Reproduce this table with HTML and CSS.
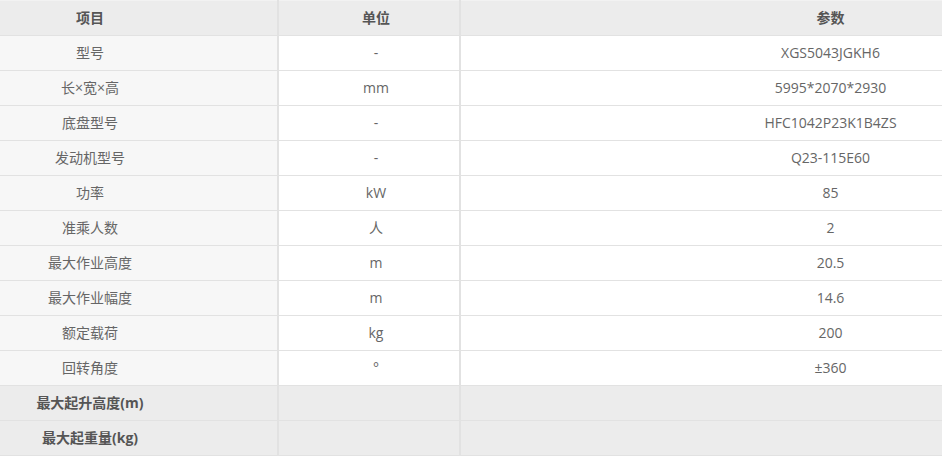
FILE: index.html
```html
<!DOCTYPE html>
<html lang="zh-CN">
<head>
<meta charset="utf-8">
<title>参数</title>
<link rel="stylesheet" href="styles.css">
</head>
<body>
<table class="spec">
  <thead>
    <tr><th class="c1">项目</th><th class="c2">单位</th><th class="c3">参数</th></tr>
  </thead>
  <tbody>
    <tr><td class="c1">型号</td><td class="c2">-</td><td class="c3">XGS5043JGKH6</td></tr>
    <tr><td class="c1">长×宽×高</td><td class="c2">mm</td><td class="c3">5995*2070*2930</td></tr>
    <tr><td class="c1">底盘型号</td><td class="c2">-</td><td class="c3">HFC1042P23K1B4ZS</td></tr>
    <tr><td class="c1">发动机型号</td><td class="c2">-</td><td class="c3">Q23-115E60</td></tr>
    <tr><td class="c1">功率</td><td class="c2">kW</td><td class="c3">85</td></tr>
    <tr><td class="c1">准乘人数</td><td class="c2">人</td><td class="c3">2</td></tr>
    <tr><td class="c1">最大作业高度</td><td class="c2">m</td><td class="c3">20.5</td></tr>
    <tr><td class="c1">最大作业幅度</td><td class="c2">m</td><td class="c3">14.6</td></tr>
    <tr><td class="c1">额定载荷</td><td class="c2">kg</td><td class="c3">200</td></tr>
    <tr><td class="c1">回转角度</td><td class="c2">°</td><td class="c3">±360</td></tr>
    <tr class="sub"><td class="c1">最大起升高度(m)</td><td class="c2"></td><td class="c3"></td></tr>
    <tr class="sub"><td class="c1">最大起重量(kg)</td><td class="c2"></td><td class="c3"></td></tr>
  </tbody>
</table>
</body>
</html>
```

FILE: styles.css
```css
html, body {
  margin: 0;
  padding: 0;
  background: #ffffff;
}
body {
  font-family: "Open Sans", "Noto Sans CJK SC", sans-serif;
  font-size: 14px;
  color: #666666;
}
.spec {
  width: 942px;
  border-collapse: collapse;
  table-layout: fixed;
}
.spec th,
.spec td {
  height: 34px;
  padding: 0;
  text-align: center;
  vertical-align: middle;
  border-top: 1px solid #e2e2e2;
  border-bottom: 1px solid #e2e2e2;
  line-height: 20px;
  white-space: nowrap;
}
.spec th {
  background: #ececec;
  color: #555555;
  font-weight: bold;
}
.spec thead th {
  border-top: 1px solid #f2f2f2;
}
.spec .c1 {
  width: 180px;
  padding-right: 97px;
  border-right: 2px solid #e2e2e2;
}
.spec td.c1 {
  background: #f7f7f7;
}
.spec .c2 {
  width: 166px;
  padding-left: 14px;
  border-right: 2px solid #e2e2e2;
}
.spec .c3 {
  padding-left: 258px;
}
.spec tr.sub td {
  background: #ececec;
  color: #555555;
  font-weight: bold;
}
```
